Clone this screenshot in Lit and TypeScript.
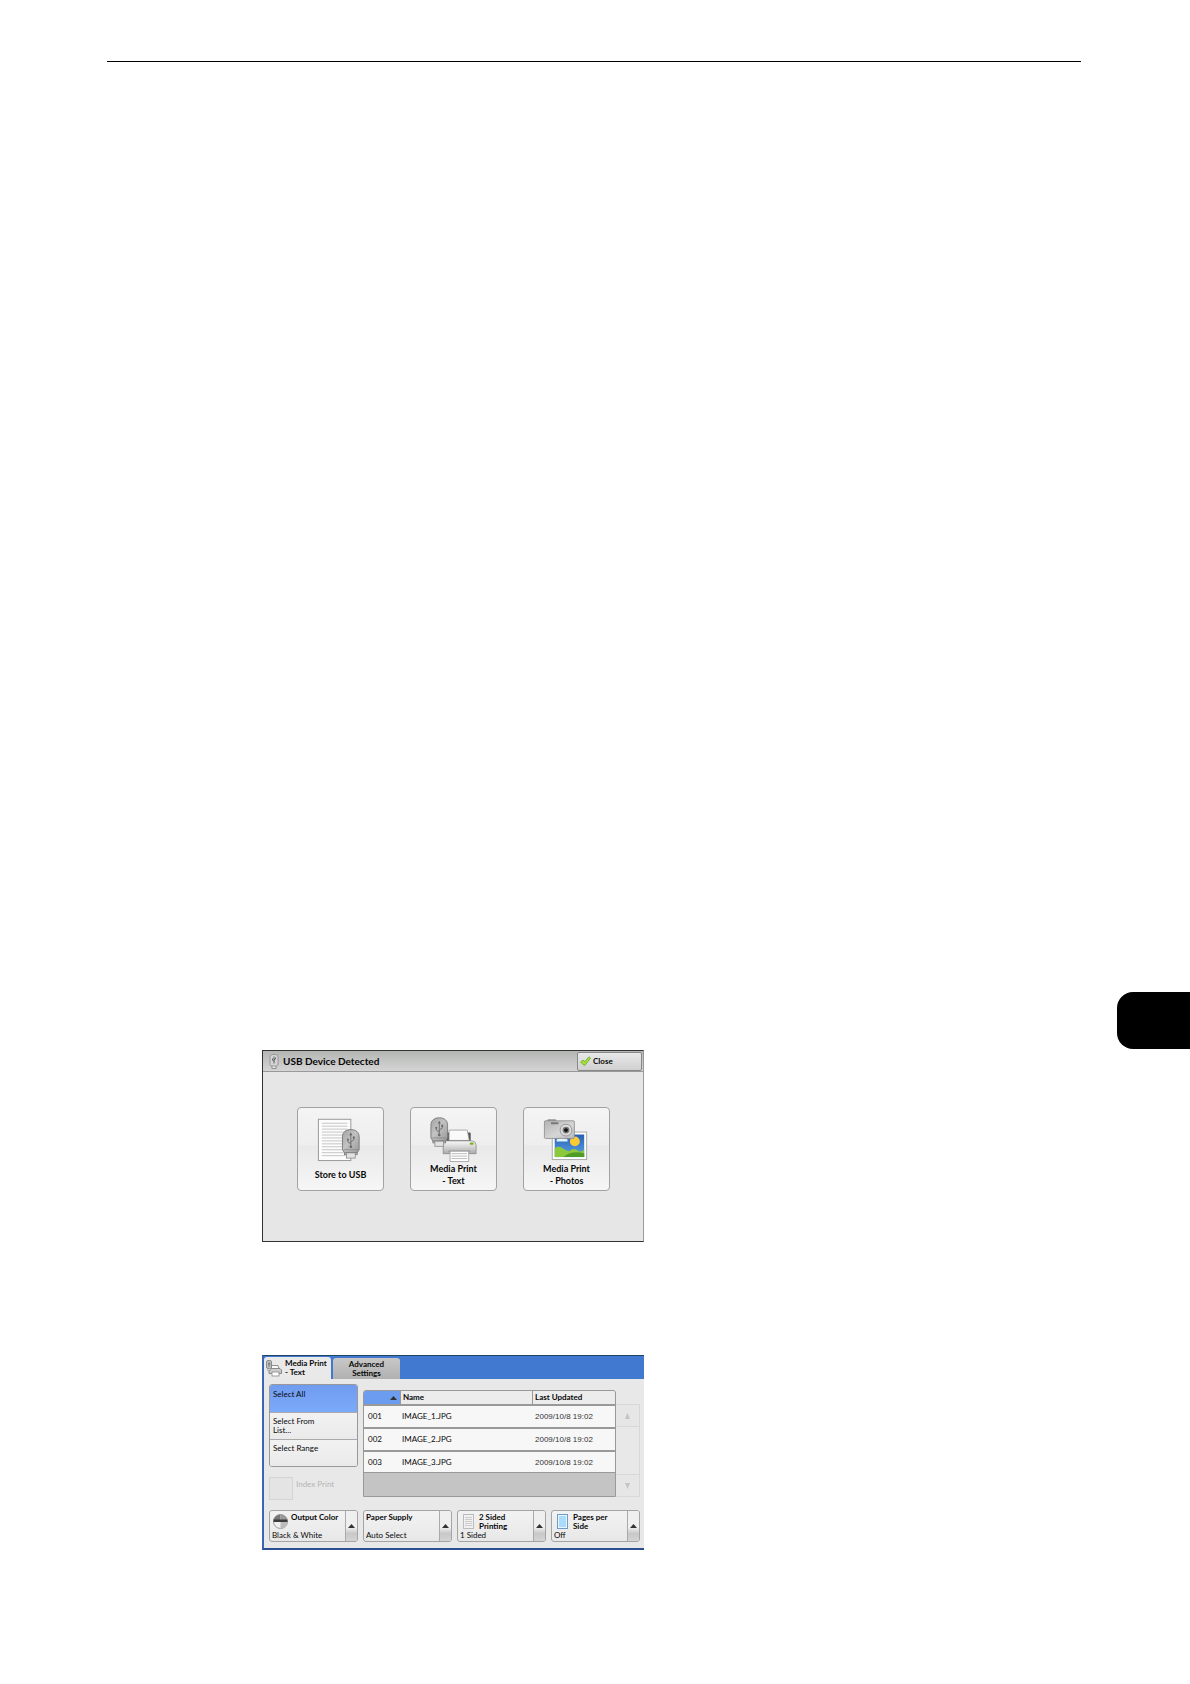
import { LitElement, html, svg, css, nothing } from "lit";
import { customElement, state } from "lit/decorators.js";
import { classMap } from "lit/directives/class-map.js";

/* USB stick, 18 x 30 units */
const usb = (transform: string) => svg`
  <g transform=${transform}>
    <rect x="2.5" y="20" width="13" height="6" fill="#c4c4c4" stroke="#777" stroke-width=".8"/>
    <rect x="4.5" y="24" width="9" height="5.5" fill="#e2e2e2" stroke="#888" stroke-width=".8"/>
    <path d="M.5 21V8C.5 3 4 .5 9 .5S17.500 3 17.500 8V21L15.500 24H2.500Z" fill="url(#metal)" stroke="#777" stroke-width=".9"/>
    <path d="M1.500 21H16.500" stroke="#888" stroke-width=".8"/>
    <path d="M9 6V17M9 15L6 13V10.500M9 13L12 11V8.500" fill="none" stroke="#666" stroke-width=".9"/>
    <path d="M9 3.500L10.600 6.300H7.400Z" fill="#666"/>
    <circle cx="9" cy="18" r="1.300" fill="#666"/>
    <circle cx="6" cy="10.500" r="1" fill="#666"/>
    <rect x="11" y="7.500" width="2" height="2" fill="#666"/>
  </g>`;

const defs = svg`
  <defs>
    <linearGradient id="metal" x1="0" x2="1" y1="0" y2="1">
      <stop offset="0" stop-color="#a2a2a2"/><stop offset=".45" stop-color="#c2c2c2"/><stop offset="1" stop-color="#999"/>
    </linearGradient>
    <linearGradient id="shell" x1="0" x2="0" y1="0" y2="1">
      <stop offset="0" stop-color="#fafafa"/><stop offset="1" stop-color="#aaa"/>
    </linearGradient>
    <linearGradient id="case" x1="0" x2="1" y1="0" y2="1">
      <stop offset="0" stop-color="#b4b4b4"/><stop offset=".6" stop-color="#d6d6d6"/><stop offset="1" stop-color="#b8b8b8"/>
    </linearGradient>
    <linearGradient id="sky" x1="0" x2="0" y1="0" y2="1">
      <stop offset="0" stop-color="#2860b4"/><stop offset="1" stop-color="#5ca4e4"/>
    </linearGradient>
  </defs>`;

const printer = svg`
  <rect x="36" y="25" width="24.500" height="9" rx="1" fill="#555"/>
  <path d="M38.500 33V22.500H57L59 33Z" fill="#fafafa" stroke="#999" stroke-width=".8"/>
  <path d="M34 33.500H62Q66 34 66 38V46.500H32.500V36Q32.500 34 34 33.500Z" fill="url(#shell)" stroke="#888" stroke-width=".8"/>
  <path d="M38 44H60" stroke="#888"/>
  <path d="M39.500 44H58.500V54.500H39.500Z" fill="#fff" stroke="#999" stroke-width=".8"/>
  <path d="M41 46.500H57M41 49H57M41 51.500H57" stroke="#bbb"/>
  <rect x="59.500" y="35" width="4" height="2.500" rx="1" fill="#7fae24"/>`;

const storeIcon = html`
  <svg class="art" viewBox="0 0 86 56" aria-hidden="true">${defs}
    <rect x="20.500" y="11.500" width="33" height="42" fill="#fcfcfc" stroke="#999"/>
    <path d="M24 15.500H50M24 18.500H50M24 21.500H50M24 24.500H50M24 27.500H50M24 30.500H50M24 33.500H50M24 36.500H50M24 39.500H50M24 42.500H50M24 45.500H50M24 48.500H50" stroke="#c4c4c4"/>
    ${usb("translate(44.500 21.500)")}
  </svg>`;

const textIcon = html`
  <svg class="art" viewBox="0 0 86 56" aria-hidden="true">${defs}
    ${printer}
    ${usb("translate(19.500 9.500)")}
  </svg>`;

const photoIcon = html`
  <svg class="art" viewBox="0 0 86 56" aria-hidden="true">${defs}
    <rect x="28.500" y="24.500" width="35" height="28" fill="#fff" stroke="#aaa"/>
    <rect x="31" y="27" width="30" height="23" fill="url(#sky)"/>
    <path d="M31 41Q35 38 39 41T46 44Q50 40 54 43T61 42V50H31Z" fill="#8cc83c"/>
    <path d="M40 50Q47 43 61 46V50Z" fill="#4f9d28"/>
    <path d="M33 34Q32 31 36 31Q38 29 41 31Q45 31 44 34Z" fill="#e4f2fc"/>
    <circle cx="51.500" cy="34" r="5" fill="#fbca34"/>
    <path d="M24 13.500V12H32V13.500" fill="#999" stroke="#777" stroke-width=".7"/>
    <rect x="20.500" y="13" width="30.500" height="18" rx="1" fill="url(#case)" stroke="#888" stroke-width=".8"/>
    <rect x="27" y="14.500" width="8" height="2" rx="1" fill="#777"/>
    <circle cx="42.500" cy="22.500" r="6" fill="#ddd" stroke="#888" stroke-width=".8"/>
    <circle cx="42.500" cy="22.500" r="3.500" fill="#777"/>
    <circle cx="42.500" cy="22.500" r="2" fill="#111"/>
  </svg>`;

const ballIcon = html`
  <svg class="ball" viewBox="0 0 15 15" aria-hidden="true">
    <circle cx="7.500" cy="7.500" r="7" fill="#f0f0f0" stroke="#999"/>
    <path d="M.5 7.500A7 7 0 0 1 7.500 .5V7.500Z" fill="#777"/>
    <path d="M7.500 7.500V.5A7 7 0 0 1 14.500 7.500Z" fill="#999"/>
    <path d="M.7 5.500H14.300L14.500 8H.5Z" fill="#3c3c3c"/>
    <path d="M7.500 8H14.500A7 7 0 0 1 7.500 14.500Z" fill="#bbb"/>
  </svg>`;

const sheetIcon = html`
  <svg class="sheet" viewBox="0 0 11 15" aria-hidden="true">
    <rect x=".5" y=".5" width="10" height="14" fill="#f0f0f0" stroke="#bbb"/>
    <path d="M2 3.500H9M2 5.500H9M2 7.500H9M2 9.500H9M2 11.500H9" stroke="#ccc"/>
  </svg>`;

const pageIcon = html`
  <svg class="sheet" viewBox="0 0 11 15" aria-hidden="true">
    <rect x=".5" y=".5" width="10" height="14" fill="#e8f6ff" stroke="#6f9cc4"/>
    <rect x="2" y="2" width="7" height="11" fill="#acdafa"/>
  </svg>`;

const OPTIONS = [
  { title: "Output Color", value: "Black & White", icon: ballIcon },
  { title: "Paper Supply", value: "Auto Select", icon: null },
  { title: "2 Sided\nPrinting", value: "1 Sided", icon: sheetIcon },
  { title: "Pages per\nSide", value: "Off", icon: pageIcon },
];

const FILES = [
  { id: "001", name: "IMAGE_1.JPG", updated: "2009/10/8 19:02" },
  { id: "002", name: "IMAGE_2.JPG", updated: "2009/10/8 19:02" },
  { id: "003", name: "IMAGE_3.JPG", updated: "2009/10/8 19:02" },
];

const base = css`
  * { box-sizing: border-box; }
  :host { display: block; font-family: Lato, "Open Sans", sans-serif; color: #080808; }
  button { font: inherit; color: inherit; margin: 0; padding: 0; text-align: left; cursor: pointer; }
  svg { display: block; flex: none; }
`;

@customElement("usb-dialog")
class UsbDialog extends LitElement {
  static styles = [base, css`
    .dialog { border: 1px solid #333; border-right-color: #999; background: #e6e6e6; }
    .bar { display: flex; align-items: center; height: 21px; padding-left: 6px; gap: 4px;
      border-bottom: 1px solid #999; background: linear-gradient(#b4b6b4, #d4d4d4); }
    .stick { width: 10px; height: 15px; }
    .title { flex: 1; margin: 0; font-size: 10px; line-height: 14px; font-weight: 700; }
    .close { display: flex; align-items: center; gap: 2px; width: 65px; height: 19px; margin-right: 1px; padding-left: 2px;
      border: 1px solid #888; border-radius: 2px; background: linear-gradient(#e8e8e8, #d0d0d0);
      font-size: 8px; font-weight: 700; line-height: 10px; }
    .tick { width: 11px; height: 10px; }
    .tiles { display: grid; grid-template-columns: repeat(3, 1fr); gap: 26px; padding: 35px 33px 50px 34px; }
    .tile { display: flex; flex-direction: column; align-items: center; padding-bottom: 3px;
      border: 1px solid #a2a2a2; border-radius: 4px;
      background: linear-gradient(#f4f4f4, #eee 45%, #e9e9e9 46%, #f6f6f6); }
    .art { width: 100%; height: 55px; }
    .label { display: flex; align-items: center; height: 24px; font-size: 9px; line-height: 12px; font-weight: 700;
      text-align: center; white-space: pre-line; }
  `];

  render() {
    const tiles = [
      { label: "Store to USB", icon: storeIcon },
      { label: "Media Print\n- Text", icon: textIcon },
      { label: "Media Print\n- Photos", icon: photoIcon },
    ];
    return html`
      <section class="dialog">
        <header class="bar">
          <svg class="stick" viewBox="0 0 18 30" aria-hidden="true">
            <rect x="5" y="22" width="8" height="7" fill="#e8e8e8" stroke="#777" stroke-width="1.500"/>
            <path d="M1 21V6Q1 1 6 1H12Q17 1 17 6V21L15 24H3Z" fill="#d4d4d4" stroke="#888" stroke-width="1.500"/>
            <path d="M9 5V19M9 15L6 12V9M9 12L12 10V7" fill="none" stroke="#555" stroke-width="1.800"/>
          </svg>
          <h2 class="title">USB Device Detected</h2>
          <button class="close" type="button">
            <svg class="tick" viewBox="0 0 11 10" aria-hidden="true">
              <path d="M.6 6L3 4.200L4.800 5.500L9 .8L10.500 2.200L5 9.200L3.500 9Z" fill="#a4e03c" stroke="#6aa822" stroke-width=".8"/>
            </svg>
            Close
          </button>
        </header>
        <div class="tiles">
          ${tiles.map((t) => html`
            <button class="tile" type="button">${t.icon}<span class="label">${t.label}</span></button>`)}
        </div>
      </section>`;
  }
}

@customElement("media-print")
class MediaPrint extends LitElement {
  static styles = [base, css`
    :host { font-size: 8px; line-height: 9px; }
    .screen { border-top: 1px solid #1f4560; border-left: 2px solid #3c66b4; border-bottom: 2px solid #2c5090; background: #e8e8e8; }
    .tabs { display: flex; align-items: flex-end; gap: 2px; height: 23px; background: #4178d0; }
    .tab { display: flex; align-items: center; width: 67px; height: 21px; border: 0; border-radius: 3px 3px 0 0;
      background: linear-gradient(#c8c8c8, #b0b0b0); font-weight: 700; }
    .tab span { flex: 1; text-align: center; white-space: pre-line; }
    .tab.active { height: 22px; padding-left: 2px; gap: 3px; background: #e9e9ea; }
    .tab.active span { text-align: left; }
    .mini { width: 16px; height: 17px; }
    .work { display: grid; grid-template-columns: 89px minmax(0, 1fr); column-gap: 5px; padding: 5px 4px 0 5px; }
    .modes { display: flex; flex-direction: column; border: 1px solid #999; border-radius: 3px; overflow: hidden; }
    .mode { display: flex; align-items: flex-start; height: 27px; padding: 5px 3px 0; border: 0;
      background: linear-gradient(#f2f2f2, #eaeaea); white-space: pre-line; }
    .mode + .mode { padding-top: 4px; border-top: 1px solid #aaa; }
    .mode.chosen { background: linear-gradient(#709cf0, #7caafa); }
    .index { display: flex; align-items: flex-start; gap: 3px; margin-top: 10px; color: #b4b4b4; line-height: 14px; }
    .box { appearance: none; width: 24px; height: 23px; margin: 0; border: 1px solid #d4d4d4; background: #e4e4e4; }
    .list { display: grid; grid-template-columns: minmax(0, 1fr) 24px; margin-top: 6px; height: 107px; }
    .files { border: 1px solid #999; border-radius: 3px 3px 0 0; background: #c4c4c4; overflow: hidden; }
    table { width: 100%; border-collapse: separate; border-spacing: 0; table-layout: fixed; }
    .num { width: 36px; }
    .when { width: 83px; }
    th, td { padding: 0 0 0 2px; text-align: left; }
    th { height: 13px; background: #ececec; border-left: 1px solid #999; }
    th:first-child { padding: 0; border-left: 0; }
    .sort { display: flex; align-items: center; justify-content: flex-end; width: 100%; height: 13px; padding-right: 3px;
      border: 0; background: #6c9cf0; }
    .caret { width: 7px; height: 4px; }
    td { height: 23px; border-top: 2px solid #999; background: #f7f7f7; }
    tbody tr:last-child td { border-bottom: 1px solid #999; }
    td:first-child { padding-left: 4px; }
    .date { padding-left: 3px; font-family: "Liberation Sans", Arial, sans-serif; color: #333; }
    .scroll { display: flex; flex-direction: column; justify-content: space-between; margin-top: 14px;
      border: 1px solid #d8d8d8; border-left: 0; }
    .step { display: grid; place-items: center; height: 22px; border: 0; border-bottom: 1px solid #d8d8d8; background: #e6e6e6; }
    .step:last-child { border-bottom: 0; border-top: 1px solid #d8d8d8; }
    .tri { width: 5px; height: 6px; }
    .options { display: grid; grid-template-columns: repeat(4, 1fr); gap: 5px; padding: 10px 4px 6px 5px; }
    .option { display: grid; grid-template-columns: minmax(0, 1fr) 12px; height: 32px; border: 1px solid #a4a4a4; border-radius: 3px;
      background: linear-gradient(#f2f2f2, #e8e8e8); overflow: hidden; }
    .face { display: grid; grid-template-rows: 18px 9px; padding: 2px 0 0 2px; }
    .head { display: flex; font-weight: 700; white-space: pre-line; }
    .slot { display: flex; justify-content: center; width: 19px; padding-top: 1px; padding-right: 2px; }
    .ball { width: 15px; height: 15px; }
    .sheet { width: 11px; height: 15px; }
    .more { display: grid; place-items: center; border-left: 1px solid #aaa; background: linear-gradient(#efefef 55%, #c8c8c8 75%, #d4d4d4); }
  `];

  @state() private mode = 0;

  render() {
    const modes = ["Select All", "Select From\nList...", "Select Range"];
    const up = html`<svg class="caret" viewBox="0 0 7 4" aria-hidden="true"><path d="M0 4L3.500 0L7 4Z" fill="#333"/></svg>`;
    return html`
      <section class="screen">
        <nav class="tabs">
          <button class="tab active" type="button">
            <svg class="mini" viewBox="0 0 16 17" aria-hidden="true">
              <path d="M5 8.500V5.500H12L13 8.500" fill="#fafafa" stroke="#777" stroke-width=".8"/>
              <path d="M4 8.500H14L15.500 10V13.500H3V9.500Z" fill="#ccc" stroke="#777" stroke-width=".8"/>
              <rect x="6" y="12" width="7" height="4" fill="#fff" stroke="#888" stroke-width=".8"/>
              <rect x=".5" y=".5" width="5" height="8" rx="1.500" fill="#c4c4c4" stroke="#777" stroke-width=".8"/>
              <path d="M3 2V7M2 4H4.500" stroke="#666" stroke-width=".8"/>
              <rect x="1.800" y="8.500" width="2.500" height="2" fill="#ddd" stroke="#888" stroke-width=".6"/>
            </svg>
            <span>${"Media Print\n- Text"}</span>
          </button>
          <button class="tab" type="button"><span>${"Advanced\nSettings"}</span></button>
        </nav>
        <div class="work">
          <div class="side">
            <div class="modes">
              ${modes.map((m, i) => html`
                <button type="button" class=${classMap({ mode: true, chosen: i === this.mode })}
                  @click=${() => (this.mode = i)}>${m}</button>`)}
            </div>
            <label class="index"><input class="box" type="checkbox" disabled>Index Print</label>
          </div>
          <div class="list">
            <div class="files">
              <table>
                <colgroup><col class="num"><col><col class="when"></colgroup>
                <thead>
                  <tr>
                    <th><button class="sort" type="button" aria-label="Sort">${up}</button></th>
                    <th>Name</th>
                    <th>Last Updated</th>
                  </tr>
                </thead>
                <tbody>
                  ${FILES.map((f) => html`<tr><td>${f.id}</td><td>${f.name}</td><td class="date">${f.updated}</td></tr>`)}
                </tbody>
              </table>
            </div>
            <div class="scroll">
              <button class="step" type="button" aria-label="Up" disabled>
                <svg class="tri" viewBox="0 0 5 6" aria-hidden="true"><path d="M0 6L2.500 0L5 6Z" fill="#c4c4c4"/></svg>
              </button>
              <button class="step" type="button" aria-label="Down" disabled>
                <svg class="tri" viewBox="0 0 5 6" aria-hidden="true"><path d="M0 0H5L2.500 6Z" fill="#c4c4c4"/></svg>
              </button>
            </div>
          </div>
        </div>
        <div class="options">
          ${OPTIONS.map((o) => html`
            <button class="option" type="button">
              <span class="face">
                <span class="head">${o.icon ? html`<span class="slot">${o.icon}</span>` : nothing}<span>${o.title}</span></span>
                <span>${o.value}</span>
              </span>
              <span class="more">${up}</span>
            </button>`)}
        </div>
      </section>`;
  }
}

@customElement("app-root")
class AppRoot extends LitElement {
  static styles = css`
    :host { display: block; }
    .page { display: flex; flex-direction: column; box-sizing: border-box; min-height: 100vh; padding-top: 61px; background: #fff; }
    .rule { width: auto; height: 1px; margin: 0 109px 930px 107px; border: 0; background: #000; }
    .thumb { align-self: flex-end; width: 73px; height: 57px; border-radius: 16px 0 0 16px; background: #000; }
    .figures { display: flex; flex-direction: column; gap: 113px; max-width: 382px; margin: 1px 0 0 262px; }
  `;

  render() {
    return html`
      <main class="page">
        <hr class="rule">
        <div class="thumb"></div>
        <div class="figures">
          <usb-dialog></usb-dialog>
          <media-print></media-print>
        </div>
      </main>`;
  }
}
